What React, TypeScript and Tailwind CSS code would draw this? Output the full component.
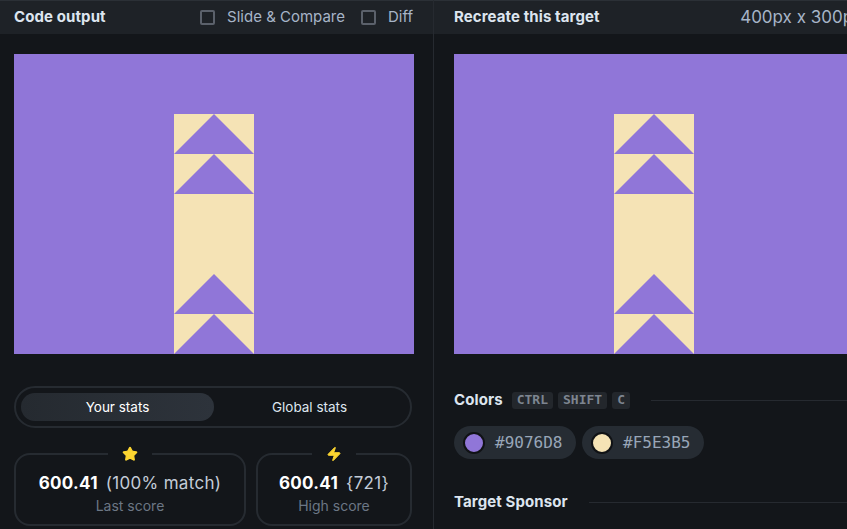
import { Star, Zap } from 'lucide-react'

const colors = ['#9076D8', '#F5E3B5']

function Target() {
  // beige column with four purple arrows pointing up
  return (
    <svg width="400" height="300" viewBox="0 0 400 300" className="block shrink-0">
      <rect width="400" height="300" fill="#9076D8" />
      <rect x="160" y="60" width="80" height="240" fill="#F5E3B5" />
      <polygon points="160,100 200,60 240,100" fill="#9076D8" />
      <polygon points="160,140 200,100 240,140" fill="#9076D8" />
      <polygon points="160,260 200,220 240,260" fill="#9076D8" />
      <polygon points="160,300 200,260 240,300" fill="#9076D8" />
    </svg>
  )
}

function Checkbox({ label }: { label: string }) {
  return (
    <label className="flex items-center gap-[12px]">
      <span className="h-[15px] w-[15px] rounded-[2px] border-2 border-[#5b616b]" />
      <span className="text-[15px] text-[#a7b5c8]">{label}</span>
    </label>
  )
}

function StatCard({ icon, value, extra, label, className }: { icon: React.ReactNode; value: string; extra: string; label: string; className: string }) {
  return (
    <div className={`relative h-[73px] rounded-[16px] border-2 border-[#262b31] flex flex-col items-center pt-[17px] ${className}`}>
      <div className="absolute -top-[11px] left-1/2 -translate-x-1/2 bg-[#13161a] px-[14px] flex items-center justify-center h-[20px]">
        {icon}
      </div>
      <div className="flex items-baseline gap-[8px] text-[17px] leading-[22px] tracking-[0.3px]">
        <span className="font-bold text-white">{value}</span>
        <span className="text-[#c3ccd8]">{extra}</span>
      </div>
      <div className="mt-[2px] text-[14px] leading-[20px] text-[#6c7785]">{label}</div>
    </div>
  )
}

export default function App() {
  return (
    <div className="w-[847px] h-[529px] flex overflow-hidden bg-[#13161a] font-['Inter',sans-serif]">
      {/* Left panel */}
      <div className="w-[434px] shrink-0 flex flex-col border-r border-[#262a30]">
        <div className="h-[34px] shrink-0 bg-[#1e2227] border-t border-[#2b3036] px-[14px] flex items-center justify-between">
          <span className="text-[15px] font-bold text-[#dde5ef] tracking-[0.1px]">Code output</span>
          <div className="flex items-center gap-[16px] pr-[6px]">
            <Checkbox label="Slide & Compare" />
            <Checkbox label="Diff" />
          </div>
        </div>
        <div className="px-[14px] pt-[20px] flex flex-col">
          <Target />
          <div className="mt-[32px] w-[398px] h-[42px] rounded-full border-2 border-[#262b31] p-[5px] flex">
            <div className="w-[193px] h-full rounded-full bg-gradient-to-r from-[#252a30] to-[#2d333b] flex items-center justify-center text-[13.5px] text-white">
              Your stats
            </div>
            <div className="flex-1 flex items-center justify-center text-[13.5px] text-[#dfe6ef]">Global stats</div>
          </div>
          <div className="mt-[25px] flex gap-[10px] w-[398px]">
            <StatCard
              className="w-[232px]"
              icon={<Star size={16} className="text-[#fcd530]" fill="#fcd530" />}
              value="600.41"
              extra="(100% match)"
              label="Last score"
            />
            <StatCard
              className="flex-1"
              icon={<Zap size={16} className="text-[#fcd530]" fill="#fcd530" strokeWidth={1.5} />}
              value="600.41"
              extra="{721}"
              label="High score"
            />
          </div>
        </div>
      </div>

      {/* Right panel */}
      <div className="flex-1 min-w-0 flex flex-col overflow-hidden">
        <div className="h-[34px] shrink-0 bg-[#1e2227] border-t border-[#2b3036] pl-[20px] flex items-center justify-between whitespace-nowrap">
          <span className="text-[15px] font-bold text-[#dde5ef] tracking-[0.1px]">Recreate this target</span>
          <span className="text-[17px] text-[#a7b5c8] -mr-[15px]">400px x 300px</span>
        </div>
        <div className="pl-[20px] pt-[20px] flex flex-col">
          <Target />
          <div className="mt-[38px] flex items-center h-[16px]">
            <span className="text-[15px] font-bold text-[#dde5ef] tracking-[0.1px]">Colors</span>
            <div className="ml-[9px] flex gap-[5px] font-['DejaVu_Sans_Mono',monospace] font-bold text-[13px] text-[#7d8590]">
              <span className="h-[17px] px-[5px] rounded-[3px] bg-[#23272c] flex items-center">CTRL</span>
              <span className="h-[17px] px-[5px] rounded-[3px] bg-[#23272c] flex items-center">SHIFT</span>
              <span className="h-[17px] px-[5px] rounded-[3px] bg-[#23272c] flex items-center">C</span>
            </div>
            <div className="ml-[21px] flex-1 h-px bg-[#262a30]" />
          </div>
          <div className="mt-[18px] flex gap-[6px]">
            {colors.map((c) => (
              <div key={c} className="h-[33px] w-[122px] rounded-full bg-[#262c33] flex items-center pl-[9px] gap-[10px]">
                <span className="h-[22px] w-[22px] rounded-full border-2 border-[#101215]" style={{ backgroundColor: c }} />
                <span className="font-['DejaVu_Sans_Mono',monospace] text-[16px] text-[#98a6b8]">{c}</span>
              </div>
            ))}
          </div>
          <div className="mt-[32px] flex items-center">
            <span className="text-[15px] font-bold text-[#dde5ef] tracking-[0.1px]">Target Sponsor</span>
            <div className="ml-[21px] flex-1 h-px bg-[#262a30]" />
          </div>
        </div>
      </div>
    </div>
  )
}
